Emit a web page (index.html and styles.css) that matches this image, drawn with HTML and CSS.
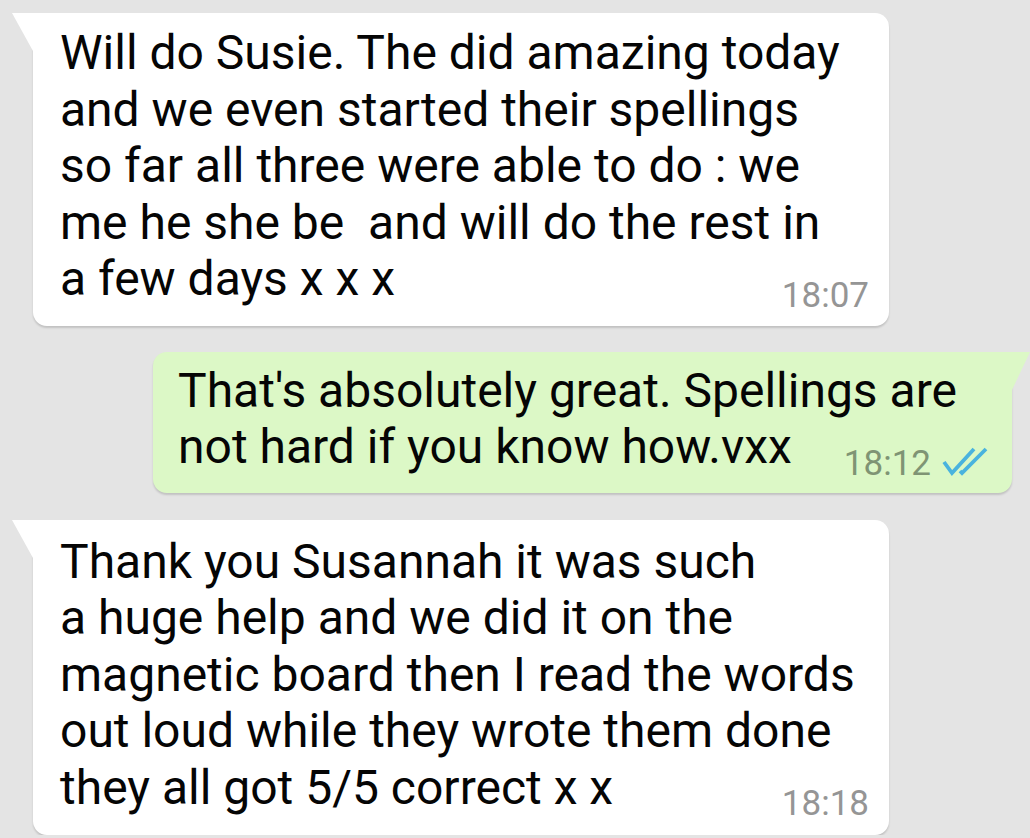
FILE: index.html
```html
<!DOCTYPE html>
<html>
  <head>
    <title>Chat</title>
    <link rel="stylesheet" href="styles.css">
  </head>
  <body>
    <div class="chat">

      <div class="bubble in">
        <div class="text">Will do Susie. The did amazing today<br>and we even started their spellings<br>so far all three were able to do : we<br>me he she be&nbsp; and will do the rest in<br>a few days x x x</div>
        <div class="meta">18:07</div>
      </div>

      <div class="bubble out">
        <div class="text">That's absolutely great. Spellings are<br>not hard if you know how.vxx</div>
        <div class="meta">18:12
          <!-- double tick -->
          <svg class="ticks" width="46" height="29" viewBox="0 0 46 29">
            <path d="M2 15 L10 26 L32 2" fill="none" stroke="#4ab3de" stroke-width="3.8"/>
            <path d="M18 24 L20 26 L44 2" fill="none" stroke="#4ab3de" stroke-width="3.8"/>
          </svg>
        </div>
      </div>

      <div class="bubble in last">
        <div class="text">Thank you Susannah it was such<br>a huge help and we did it on the<br>magnetic board then I read the words<br>out loud while they wrote them done<br>they all got 5/5 correct x x</div>
        <div class="meta">18:18</div>
      </div>

    </div>
  </body>
</html>
```

FILE: styles.css
```css
body {
  margin: 0;
  background-color: #e4e4e4;
  font-family: Roboto, 'Noto Sans', sans-serif;
}

.chat {
  display: flex;
  flex-direction: column;
  gap: 26px;
  padding-top: 13px;
}

.bubble {
  position: relative;
  display: flex;
  align-items: flex-end;
  width: 856px;
  box-sizing: border-box;
  padding: 12px 20px 18px 27px;
  border-radius: 14px;
  box-shadow: 0 2px 2px rgba(0, 0, 0, 0.15);
}

.bubble::before {
  content: '';
  position: absolute;
  top: 0;
  width: 0;
  height: 0;
  border-top: 38px solid transparent;
}

.in {
  margin-left: 33px;
  background-color: #ffffff;
  border-top-left-radius: 0;
}

.in::before {
  left: -21px;
  border-top-color: #ffffff;
  border-left: 21px solid transparent;
}

.last {
  padding-top: 14px;
  padding-bottom: 19px;
}

.out {
  margin-left: 153px;
  margin-bottom: 1px;
  width: 859px;
  padding: 11px 24px 17px 25px;
  background-color: #dcf8c6;
  border-top-right-radius: 0;
}

.out::before {
  right: -18px;
  border-top-color: #dcf8c6;
  border-right: 18px solid transparent;
}

.text {
  flex: 1;
  min-width: 0;
  white-space: nowrap;
  font-size: 48px;
  line-height: 56.5px;
  color: #050505;
}

.meta {
  flex-shrink: 0;
  display: flex;
  align-items: center;
  gap: 11px;
  font-size: 35px;
  color: #959595;
  margin-bottom: -8px;
}

.out .meta {
  color: #7f9474;
}

.ticks {
  margin-top: -4px;
}
```
